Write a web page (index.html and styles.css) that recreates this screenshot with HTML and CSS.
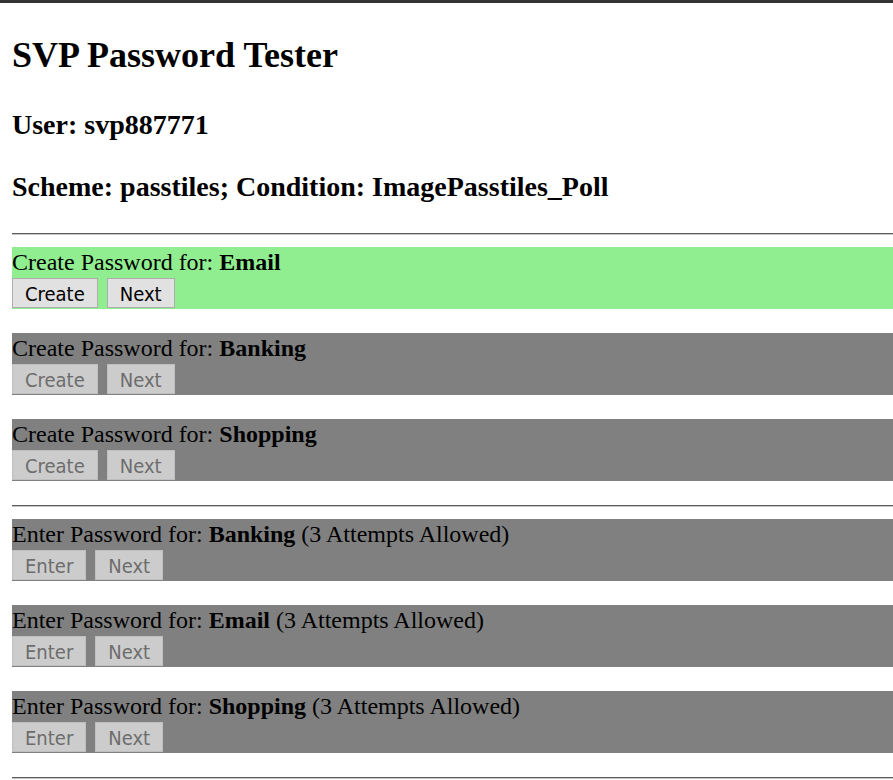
FILE: index.html
```html
<!DOCTYPE html>
<html>
<head>
<meta charset="utf-8">
<title>SVP Password Tester</title>
<link rel="stylesheet" href="styles.css">
</head>
<body>
<div class="topbar"></div>
<main class="page">
  <h1 class="title">SVP Password Tester</h1>
  <h3 class="sub">User: svp887771</h3>
  <h3 class="sub">Scheme: passtiles; Condition: ImagePasstiles_Poll</h3>
  <hr class="rule">
  <section class="task task-active">
    <div class="task-label">Create Password for: <b>Email</b></div>
    <div class="task-actions"><button class="btn">Create</button><button class="btn">Next</button></div>
  </section>
  <section class="task task-off">
    <div class="task-label">Create Password for: <b>Banking</b></div>
    <div class="task-actions"><button class="btn" disabled>Create</button><button class="btn" disabled>Next</button></div>
  </section>
  <section class="task task-off">
    <div class="task-label">Create Password for: <b>Shopping</b></div>
    <div class="task-actions"><button class="btn" disabled>Create</button><button class="btn" disabled>Next</button></div>
  </section>
  <hr class="rule">
  <section class="task task-off">
    <div class="task-label">Enter Password for: <b>Banking</b> (3 Attempts Allowed)</div>
    <div class="task-actions"><button class="btn" disabled>Enter</button><button class="btn" disabled>Next</button></div>
  </section>
  <section class="task task-off">
    <div class="task-label">Enter Password for: <b>Email</b> (3 Attempts Allowed)</div>
    <div class="task-actions"><button class="btn" disabled>Enter</button><button class="btn" disabled>Next</button></div>
  </section>
  <section class="task task-off">
    <div class="task-label">Enter Password for: <b>Shopping</b> (3 Attempts Allowed)</div>
    <div class="task-actions"><button class="btn" disabled>Enter</button><button class="btn" disabled>Next</button></div>
  </section>
  <hr class="rule">
</main>
</body>
</html>
```
FILE: styles.css
```css
html, body {
  margin: 0;
  padding: 0;
  background: #ffffff;
}
body {
  font-family: "Liberation Serif", "Times New Roman", serif;
  color: #000;
  overflow: hidden;
}
.topbar {
  height: 3px;
  background: #333333;
}
.page {
  padding-left: 12px;
}
.title {
  font-size: 36px;
  line-height: 41px;
  font-weight: bold;
  margin: 32px 0 33px;
}
.sub {
  font-size: 28px;
  line-height: 32px;
  font-weight: bold;
  margin: 0 0 30px;
}
.rule {
  margin: 0 0 12px;
  height: 0;
  border: 0;
  border-top: 1px solid #5a5a5a;
  border-bottom: 1px solid #c8c8c8;
}
.task {
  height: 62px;
  margin-bottom: 24px;
}
.task-active {
  background: #90ee90;
}
.task-off {
  background: #808080;
}
.task-label {
  font-size: 24px;
  line-height: 30px;
}
.task-actions {
  display: flex;
  gap: 9px;
  padding-top: 1px;
}
.btn {
  font-family: "DejaVu Sans Condensed", "DejaVu Sans", sans-serif;
  font-size: 20px;
  height: 30px;
  padding: 2px 12px 0;
  margin: 0;
  border: 1px solid #adadad;
  background: #e1e1e1;
  color: #000;
  border-radius: 0;
}
.btn:disabled {
  background: #cccccc;
  border-color: #bfbfbf;
  color: #6d6d6d;
}
```
